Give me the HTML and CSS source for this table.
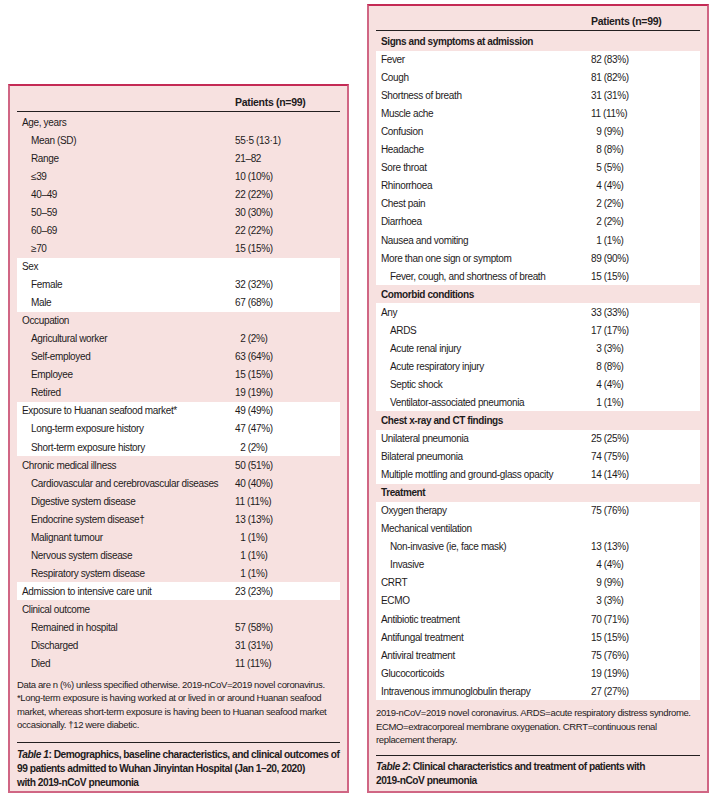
FILE: index.html
```html
<!DOCTYPE html>
<html lang="en">
<head>
<meta charset="utf-8">
<title>Tables</title>
<link rel="stylesheet" href="styles.css">
</head>
<body>
<div class="page">
  <section class="panel panel-left">
    <div class="thead"><span></span><span class="hdr">Patients (n=99)</span></div>
    <div class="rows">
      <div class="group">
        <div class="row"><span class="lbl">Age, years</span><span class="val"></span></div>
        <div class="row sub"><span class="lbl">Mean (SD)</span><span class="val">55·5 (13·1)</span></div>
        <div class="row sub"><span class="lbl">Range</span><span class="val">21–82</span></div>
        <div class="row sub"><span class="lbl">≤39</span><span class="val">10 (10%)</span></div>
        <div class="row sub"><span class="lbl">40–49</span><span class="val">22 (22%)</span></div>
        <div class="row sub"><span class="lbl">50–59</span><span class="val">30 (30%)</span></div>
        <div class="row sub"><span class="lbl">60–69</span><span class="val">22 (22%)</span></div>
        <div class="row sub"><span class="lbl">≥70</span><span class="val">15 (15%)</span></div>
      </div>
      <div class="group white">
        <div class="row"><span class="lbl">Sex</span><span class="val"></span></div>
        <div class="row sub"><span class="lbl">Female</span><span class="val">32 (32%)</span></div>
        <div class="row sub"><span class="lbl">Male</span><span class="val">67 (68%)</span></div>
      </div>
      <div class="group">
        <div class="row"><span class="lbl">Occupation</span><span class="val"></span></div>
        <div class="row sub"><span class="lbl">Agricultural worker</span><span class="val">&#8199;2 (2%)</span></div>
        <div class="row sub"><span class="lbl">Self-employed</span><span class="val">63 (64%)</span></div>
        <div class="row sub"><span class="lbl">Employee</span><span class="val">15 (15%)</span></div>
        <div class="row sub"><span class="lbl">Retired</span><span class="val">19 (19%)</span></div>
      </div>
      <div class="group white">
        <div class="row"><span class="lbl">Exposure to Huanan seafood market*</span><span class="val">49 (49%)</span></div>
        <div class="row sub"><span class="lbl">Long-term exposure history</span><span class="val">47 (47%)</span></div>
        <div class="row sub"><span class="lbl">Short-term exposure history</span><span class="val">&#8199;2 (2%)</span></div>
      </div>
      <div class="group">
        <div class="row"><span class="lbl">Chronic medical illness</span><span class="val">50 (51%)</span></div>
        <div class="row sub"><span class="lbl">Cardiovascular and cerebrovascular diseases</span><span class="val">40 (40%)</span></div>
        <div class="row sub"><span class="lbl">Digestive system disease</span><span class="val">11 (11%)</span></div>
        <div class="row sub"><span class="lbl">Endocrine system disease†</span><span class="val">13 (13%)</span></div>
        <div class="row sub"><span class="lbl">Malignant tumour</span><span class="val">&#8199;1 (1%)</span></div>
        <div class="row sub"><span class="lbl">Nervous system disease</span><span class="val">&#8199;1 (1%)</span></div>
        <div class="row sub"><span class="lbl">Respiratory system disease</span><span class="val">&#8199;1 (1%)</span></div>
      </div>
      <div class="group white">
        <div class="row"><span class="lbl">Admission to intensive care unit</span><span class="val">23 (23%)</span></div>
      </div>
      <div class="group">
        <div class="row"><span class="lbl">Clinical outcome</span><span class="val"></span></div>
        <div class="row sub"><span class="lbl">Remained in hospital</span><span class="val">57 (58%)</span></div>
        <div class="row sub"><span class="lbl">Discharged</span><span class="val">31 (31%)</span></div>
        <div class="row sub"><span class="lbl">Died</span><span class="val">11 (11%)</span></div>
      </div>
    </div>
    <p class="notes notes-left">Data are n (%) unless specified otherwise. 2019-nCoV=2019 novel coronavirus. *Long-term exposure is having worked at or lived in or around Huanan seafood market, whereas short-term exposure is having been to Huanan seafood market occasionally. †12 were diabetic.</p>
    <p class="caption caption-left"><i>Table 1</i>: Demographics, baseline characteristics, and clinical outcomes of<br>99 patients admitted to Wuhan Jinyintan Hospital (Jan 1–20, 2020)<br>with 2019-nCoV pneumonia</p>
  </section>

  <section class="panel panel-right">
    <div class="thead"><span></span><span class="hdr">Patients (n=99)</span></div>
    <div class="rows">
      <div class="group">
        <div class="row head"><span class="lbl">Signs and symptoms at admission</span><span class="val"></span></div>
      </div>
      <div class="group white">
        <div class="row"><span class="lbl">Fever</span><span class="val">82 (83%)</span></div>
        <div class="row"><span class="lbl">Cough</span><span class="val">81 (82%)</span></div>
        <div class="row"><span class="lbl">Shortness of breath</span><span class="val">31 (31%)</span></div>
        <div class="row"><span class="lbl">Muscle ache</span><span class="val">11 (11%)</span></div>
        <div class="row"><span class="lbl">Confusion</span><span class="val">&#8199;9 (9%)</span></div>
        <div class="row"><span class="lbl">Headache</span><span class="val">&#8199;8 (8%)</span></div>
        <div class="row"><span class="lbl">Sore throat</span><span class="val">&#8199;5 (5%)</span></div>
        <div class="row"><span class="lbl">Rhinorrhoea</span><span class="val">&#8199;4 (4%)</span></div>
        <div class="row"><span class="lbl">Chest pain</span><span class="val">&#8199;2 (2%)</span></div>
        <div class="row"><span class="lbl">Diarrhoea</span><span class="val">&#8199;2 (2%)</span></div>
        <div class="row"><span class="lbl">Nausea and vomiting</span><span class="val">&#8199;1 (1%)</span></div>
        <div class="row"><span class="lbl">More than one sign or symptom</span><span class="val">89 (90%)</span></div>
        <div class="row sub"><span class="lbl">Fever, cough, and shortness of breath</span><span class="val">15 (15%)</span></div>
      </div>
      <div class="group">
        <div class="row head"><span class="lbl">Comorbid conditions</span><span class="val"></span></div>
      </div>
      <div class="group white">
        <div class="row"><span class="lbl">Any</span><span class="val">33 (33%)</span></div>
        <div class="row sub"><span class="lbl">ARDS</span><span class="val">17 (17%)</span></div>
        <div class="row sub"><span class="lbl">Acute renal injury</span><span class="val">&#8199;3 (3%)</span></div>
        <div class="row sub"><span class="lbl">Acute respiratory injury</span><span class="val">&#8199;8 (8%)</span></div>
        <div class="row sub"><span class="lbl">Septic shock</span><span class="val">&#8199;4 (4%)</span></div>
        <div class="row sub"><span class="lbl">Ventilator-associated pneumonia</span><span class="val">&#8199;1 (1%)</span></div>
      </div>
      <div class="group">
        <div class="row head"><span class="lbl">Chest x-ray and CT findings</span><span class="val"></span></div>
      </div>
      <div class="group white">
        <div class="row"><span class="lbl">Unilateral pneumonia</span><span class="val">25 (25%)</span></div>
        <div class="row"><span class="lbl">Bilateral pneumonia</span><span class="val">74 (75%)</span></div>
        <div class="row"><span class="lbl">Multiple mottling and ground-glass opacity</span><span class="val">14 (14%)</span></div>
      </div>
      <div class="group">
        <div class="row head"><span class="lbl">Treatment</span><span class="val"></span></div>
      </div>
      <div class="group white">
        <div class="row"><span class="lbl">Oxygen therapy</span><span class="val">75 (76%)</span></div>
        <div class="row"><span class="lbl">Mechanical ventilation</span><span class="val"></span></div>
        <div class="row sub"><span class="lbl">Non-invasive (ie, face mask)</span><span class="val">13 (13%)</span></div>
        <div class="row sub"><span class="lbl">Invasive</span><span class="val">&#8199;4 (4%)</span></div>
        <div class="row"><span class="lbl">CRRT</span><span class="val">&#8199;9 (9%)</span></div>
        <div class="row"><span class="lbl">ECMO</span><span class="val">&#8199;3 (3%)</span></div>
        <div class="row"><span class="lbl">Antibiotic treatment</span><span class="val">70 (71%)</span></div>
        <div class="row"><span class="lbl">Antifungal treatment</span><span class="val">15 (15%)</span></div>
        <div class="row"><span class="lbl">Antiviral treatment</span><span class="val">75 (76%)</span></div>
        <div class="row"><span class="lbl">Glucocorticoids</span><span class="val">19 (19%)</span></div>
        <div class="row"><span class="lbl">Intravenous immunoglobulin therapy</span><span class="val">27 (27%)</span></div>
      </div>
    </div>
    <p class="notes notes-right">2019-nCoV=2019 novel coronavirus. ARDS=acute respiratory distress syndrome. ECMO=extracorporeal membrane oxygenation. CRRT=continuous renal replacement therapy.</p>
    <p class="caption"><i>Table 2</i>: Clinical characteristics and treatment of patients with<br>2019-nCoV pneumonia</p>
  </section>
</div>
</body>
</html>
```
FILE: styles.css
```css
html, body {
  margin: 0;
  padding: 0;
  background: #ffffff;
}
body {
  padding: 0 8px;
  font-family: "Liberation Sans", Arial, sans-serif;
  color: #1e1b1c;
}
.page {
  display: flex;
  align-items: flex-end;
  gap: 18px;
  height: 793px;
}
.panel {
  box-sizing: border-box;
  background: #f7e1e0;
  border: 2px solid #d06684;
  border-top-color: #c42a55;
  padding: 0 7px 3px 7px;
}
.panel-left { width: 341px; padding-bottom: 1px; }
.panel-right { width: 342px; }
.thead {
  display: grid;
  grid-template-columns: 218px 1fr;
  height: 25px;
  box-sizing: border-box;
  padding-top: 8px;
  line-height: 14px;
  font-size: 10.5px;
  font-weight: bold;
  letter-spacing: -0.3px;
  border-bottom: 1px solid #231f20;
}
.panel-left .thead { height: 26px; padding-top: 9px; }
.panel-right .thead { grid-template-columns: 215px 1fr; }
.rows {
  margin-top: 1px;
}
.group.white { background: #ffffff; }
.row {
  display: grid;
  grid-template-columns: 218px 1fr;
  height: 18.06px;
  align-items: center;
  font-size: 10px;
  letter-spacing: -0.35px;
  white-space: nowrap;
}
.panel-right .row { grid-template-columns: 215px 1fr; }
.lbl { padding-left: 5px; }
.row.sub .lbl { padding-left: 14px; }
.row.head { font-weight: bold; letter-spacing: -0.4px; }
.notes {
  margin: 5px 0 0 0;
  font-size: 9.5px;
  line-height: 13.6px;
  letter-spacing: -0.36px;
  padding-bottom: 8px;
  border-bottom: 1px solid #231f20;
}
.notes-left { padding-bottom: 10px; }
.notes-right { margin-top: 6px; }
.caption {
  margin: 0;
  padding-top: 4px;
  font-size: 10.2px;
  line-height: 14px;
  font-weight: bold;
  letter-spacing: -0.48px;
  white-space: nowrap;
}
.caption-left { padding-top: 5px; }
```
